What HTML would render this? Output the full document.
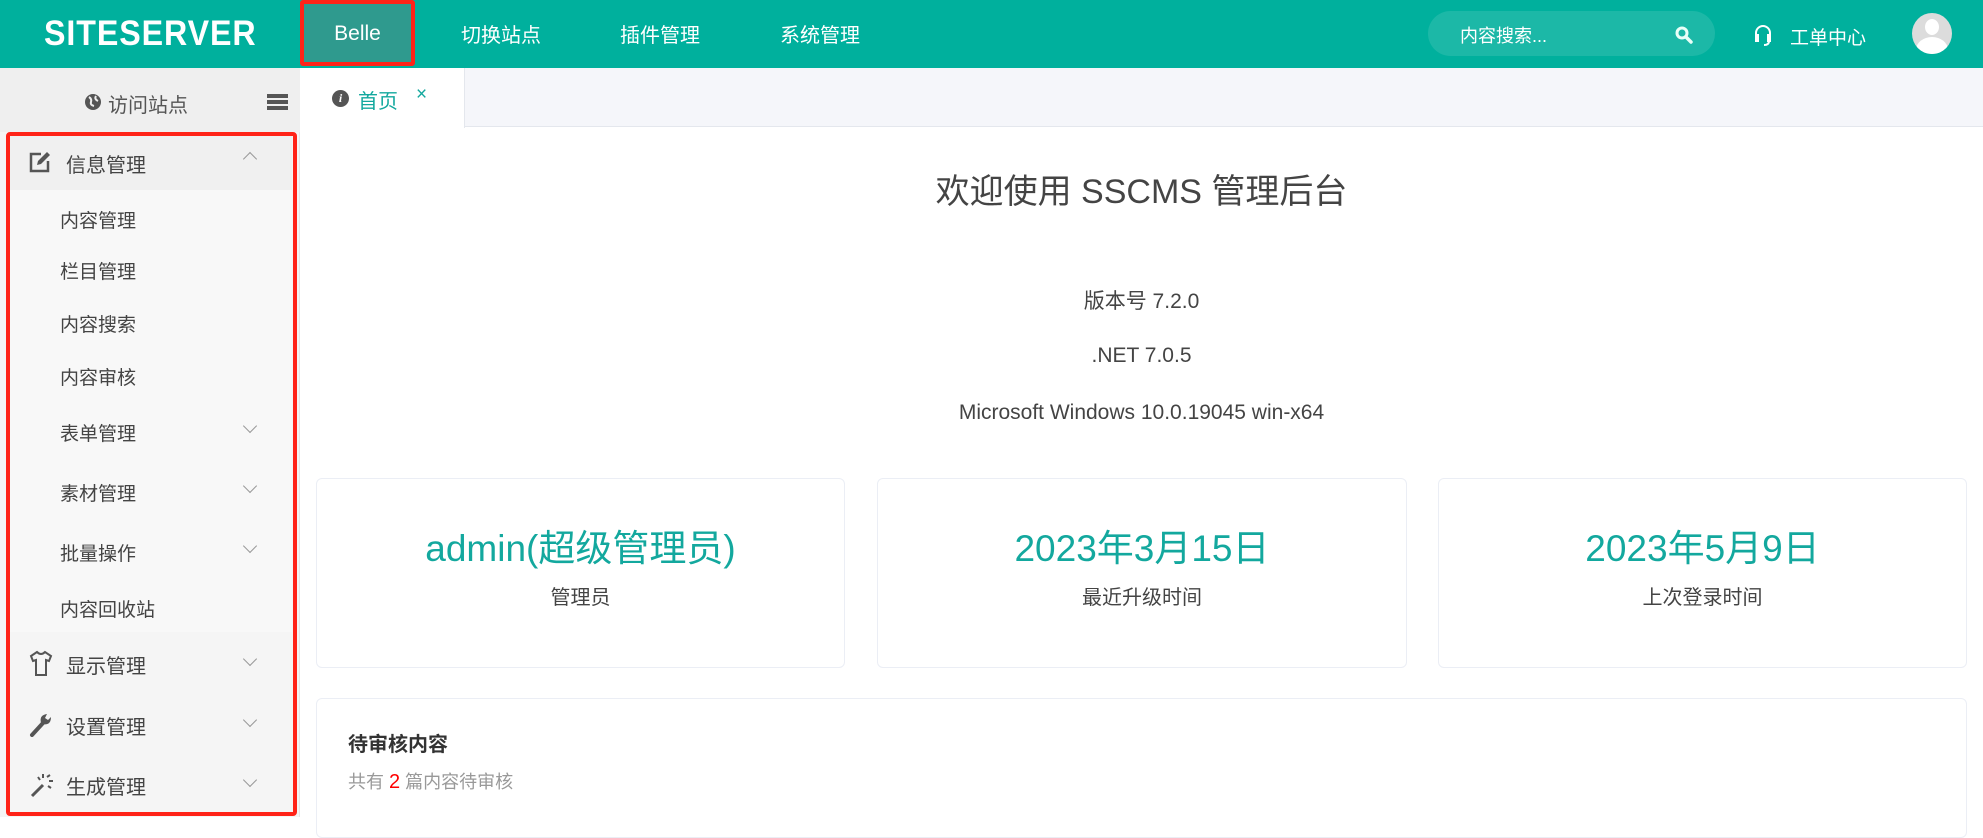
<!DOCTYPE html><html><head><meta charset="utf-8"><style>
*{margin:0;padding:0;box-sizing:border-box}
body{width:1983px;height:817px;overflow:hidden;font-family:"Liberation Sans","Noto Sans CJK SC",sans-serif;background:#fff;position:relative;color:#333}
.a{position:absolute}
.hdr{left:0;top:0;width:1983px;height:68px;background:#00b09d}
.nav{color:#fff;font-size:20px;top:19px}
.side{left:0;top:68px;width:300px;height:749px;background:#f5f5f5;border-right:1px solid #e6e6e6}
.it{position:absolute;left:60px;font-size:19px;color:#444}
.gr{position:absolute;left:66px;font-size:20px;color:#444}
.chev{position:absolute;left:245px;width:10px;height:10px;border-right:1.2px solid #999;border-bottom:1.2px solid #999;transform:rotate(45deg)}
.card{position:absolute;border:1px solid #ebeef5;border-radius:6px;background:#fff;text-align:center}
.big{color:#13a89e;font-size:37px;margin-top:39px}
.lbl{font-size:20px;color:#444;margin-top:9px}
.c{left:300px;width:1683px;text-align:center;color:#444}
</style></head><body>
<div class="a hdr"></div>
<div class="a" style="left:44px;top:14px;color:#fff;font-size:35px;font-weight:bold;letter-spacing:1px;font-family:'Liberation Sans',sans-serif;transform:scaleX(0.92);transform-origin:left">SITESERVER</div>
<div class="a" style="left:300px;top:0;width:115px;height:66px;background:#2f9a8e;border:4px solid #ff2318;border-radius:3px;color:#fff;font-size:21px;text-align:center;line-height:60px">Belle</div>
<div class="a nav" style="left:461px">切换站点</div>
<div class="a nav" style="left:620px">插件管理</div>
<div class="a nav" style="left:780px">系统管理</div>
<div class="a" style="left:1428px;top:11px;width:287px;height:45px;border-radius:23px;background:rgba(255,255,255,.11)"></div>
<div class="a" style="left:1460px;top:22px;color:#fff;font-size:18px">内容搜索...</div>
<svg class="a" style="left:1675px;top:26px" width="18" height="18" viewBox="0 0 18 18"><circle cx="7" cy="7" r="5" fill="none" stroke="#e8fff8" stroke-width="3"/><path d="M11 11l5 5" stroke="#e8fff8" stroke-width="3.5" stroke-linecap="round"/></svg>
<svg class="a" style="left:1753px;top:24px" width="20" height="24" viewBox="0 0 20 24"><path d="M3 13V9a7 7 0 0114 0v4M3 11h2v6H3zM15 11h2v6h-2zM16 17q0 4-5 4" fill="none" stroke="#fff" stroke-width="2"/></svg>
<div class="a nav" style="left:1790px;top:23px;font-size:19px">工单中心</div>
<div class="a" style="left:1912px;top:13px;width:40px;height:41px;border-radius:50%;background:#dcdcdc;overflow:hidden"><div class="a" style="left:13px;top:6px;width:14px;height:16px;border-radius:50%;background:#fff"></div><div class="a" style="left:4px;top:24px;width:32px;height:26px;border-radius:50%;background:#fff"></div></div>

<div class="a side"></div>
<div class="a" style="left:0;top:68px;width:300px;height:64px;background:#efefef"></div>
<svg class="a" style="left:84px;top:93px" width="18" height="18" viewBox="0 0 18 18"><circle cx="9" cy="9" r="8" fill="#555"/><path d="M5 4q3 2 2 5t3 4M12 3q-2 3 2 5" stroke="#eee" stroke-width="2" fill="none"/></svg>
<div class="a" style="left:108px;top:89px;font-size:20px;color:#555">访问站点</div>
<div class="a" style="left:267px;top:94px;width:21px;height:3.5px;background:#555;box-shadow:0 6px 0 #555,0 12px 0 #555"></div>
<div class="a" style="left:10px;top:134px;width:282px;height:56px;background:#f0f0f0"></div>
<div class="a" style="left:10px;top:190px;width:282px;height:442px;background:#f8f8f8"></div>
<svg class="a" style="left:29px;top:151px" width="22" height="22" viewBox="0 0 22 22"><path d="M12 3H2v17h17V10" fill="none" stroke="#555" stroke-width="2.5"/><path d="M8 14l1-4 9-9 3 3-9 9z" fill="#555"/></svg>
<div class="gr" style="top:149px">信息管理</div>
<div class="chev" style="top:154px;transform:rotate(225deg)"></div>
<div class="it" style="top:206px">内容管理</div>
<div class="it" style="top:257px">栏目管理</div>
<div class="it" style="top:310px">内容搜索</div>
<div class="it" style="top:363px">内容审核</div>
<div class="it" style="top:419px">表单管理</div><div class="chev" style="top:421px"></div>
<div class="it" style="top:479px">素材管理</div><div class="chev" style="top:481px"></div>
<div class="it" style="top:539px">批量操作</div><div class="chev" style="top:541px"></div>
<div class="it" style="top:595px">内容回收站</div>
<svg class="a" style="left:29px;top:650px" width="24" height="27" viewBox="0 0 24 27"><path d="M8 2L2 6l2 5 3-1v15h10V10l3 1 2-5-6-4q-4 4-8 0z" fill="none" stroke="#555" stroke-width="2"/></svg>
<div class="gr" style="top:650px">显示管理</div><div class="chev" style="top:654px"></div>
<svg class="a" style="left:29px;top:711px" width="24" height="26" viewBox="0 0 24 26"><path d="M3 24l11-12" stroke="#555" stroke-width="4" stroke-linecap="round"/><path d="M12 12q-2-8 6-9l-2 4 3 2 3-3q0 9-9 7z" fill="#555"/></svg>
<div class="gr" style="top:711px">设置管理</div><div class="chev" style="top:715px"></div>
<svg class="a" style="left:29px;top:772px" width="26" height="26" viewBox="0 0 26 26"><path d="M3 24l11-11" stroke="#555" stroke-width="3"/><path d="M14 2v4M9 5l2 3M20 9h4M18 5l3-2M19 14l3 2" stroke="#555" stroke-width="2"/></svg>
<div class="gr" style="top:771px">生成管理</div><div class="chev" style="top:775px"></div>
<div class="a" style="left:6px;top:132px;width:291px;height:684px;border:4px solid #ff2318;border-radius:4px"></div>

<div class="a" style="left:300px;top:68px;width:1683px;height:59px;background:#f5f6fa;border-bottom:1px solid #e4e7ed"></div>
<div class="a" style="left:300px;top:68px;width:165px;height:60px;background:#fff;border-right:1px solid #e4e7ed"></div>
<div class="a" style="left:332px;top:90px;width:17px;height:17px;border-radius:50%;background:#555;color:#fff;font-size:12px;font-style:italic;font-weight:bold;text-align:center;line-height:17px;font-family:'Liberation Serif',serif">i</div>
<div class="a" style="left:358px;top:85px;font-size:20px;color:#13a89e">首页</div>
<div class="a" style="left:416px;top:84px;font-size:19px;color:#13a89e">×</div>

<div class="a c" style="top:164px;font-size:34px">欢迎使用 SSCMS 管理后台</div>
<div class="a c" style="top:285px;font-size:21px">版本号 7.2.0</div>
<div class="a c" style="top:344px;font-size:21px">.NET 7.0.5</div>
<div class="a c" style="top:401px;font-size:21px">Microsoft Windows 10.0.19045 win-x64</div>

<div class="card" style="left:316px;top:478px;width:529px;height:190px"><div class="big">admin(超级管理员)</div><div class="lbl">管理员</div></div>
<div class="card" style="left:877px;top:478px;width:530px;height:190px"><div class="big">2023年3月15日</div><div class="lbl">最近升级时间</div></div>
<div class="card" style="left:1438px;top:478px;width:529px;height:190px"><div class="big">2023年5月9日</div><div class="lbl">上次登录时间</div></div>
<div class="card" style="left:316px;top:698px;width:1651px;height:140px"></div>
<div class="a" style="left:348px;top:728px;font-size:20px;font-weight:bold;color:#333">待审核内容</div>
<div class="a" style="left:348px;top:768px;font-size:18px;color:#999">共有 <span style="color:#f00;font-size:20px">2</span> 篇内容待审核</div>
</body></html>
